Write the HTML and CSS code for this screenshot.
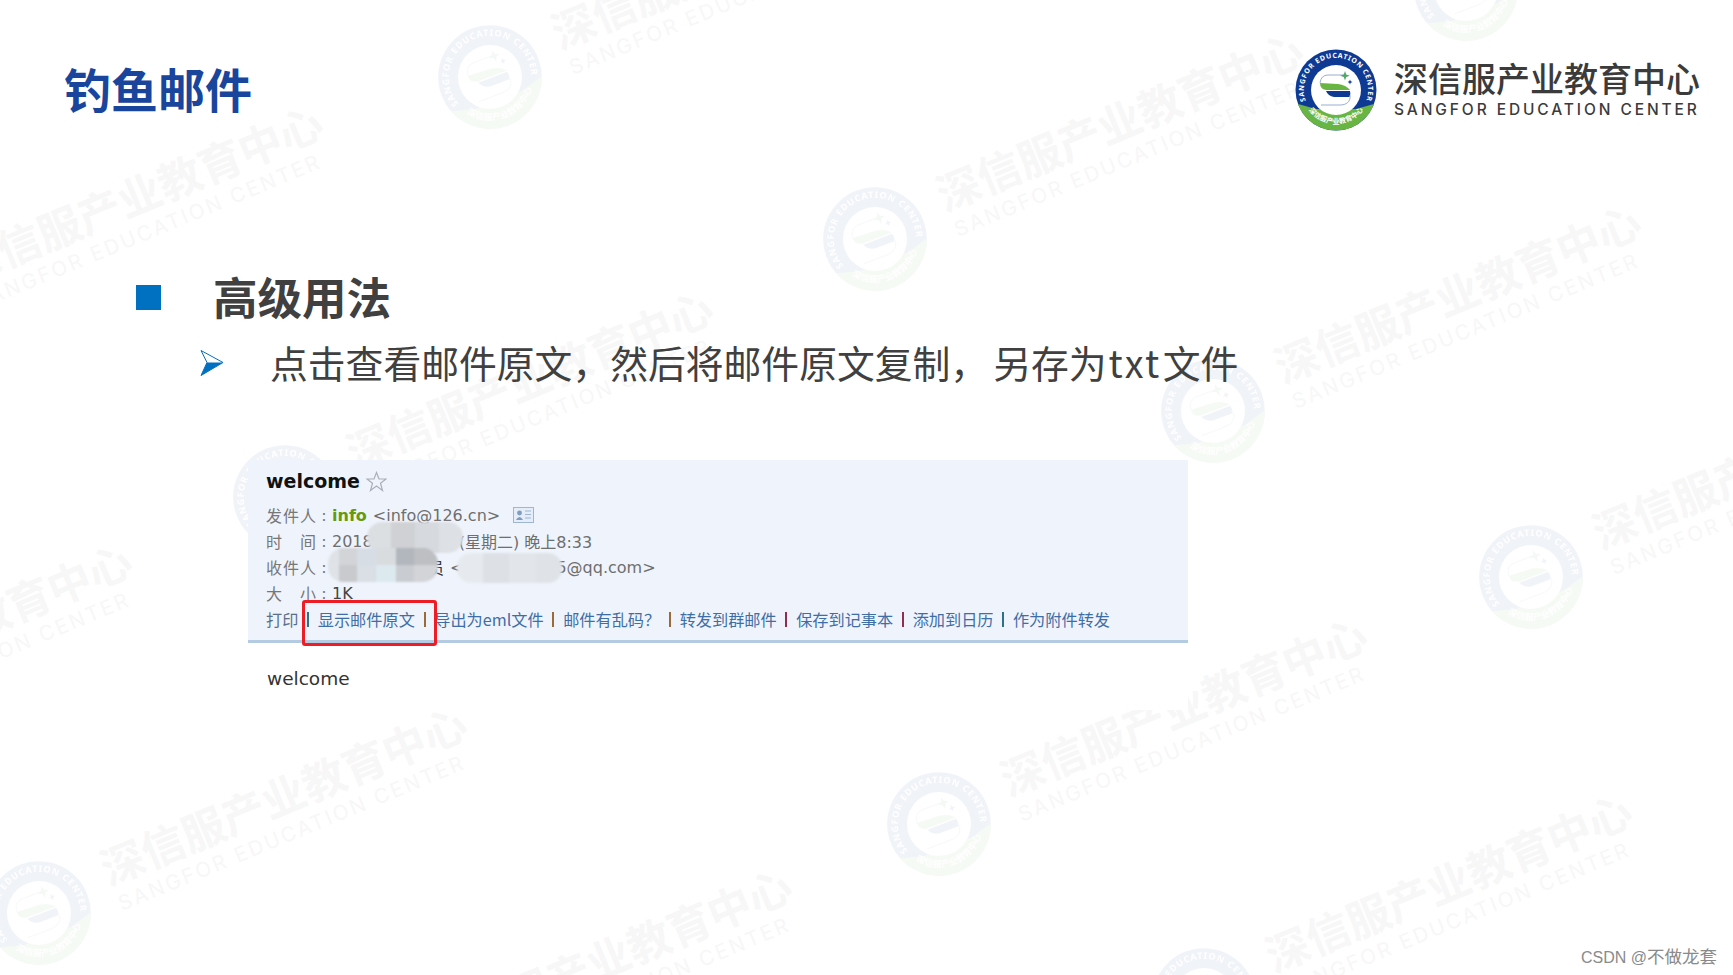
FILE: index.html
```html
<!DOCTYPE html>
<html lang="zh-CN">
<head>
<meta charset="utf-8">
<title>钓鱼邮件</title>
<link rel="stylesheet" href="styles.css">
</head>
<body>
<div class="slide">
  <svg class="watermarks" width="1733" height="975" viewBox="0 0 1733 975" aria-hidden="true">
    <defs>
      <path id="ring-top" d="M-29 14A32.2 32.2 0 1 1 29 14"/>
      <path id="ring-bottom" d="M-33 8A34 34 0 0 0 33 8"/>
      <g id="logo-mark">
        <circle r="40.5" fill="#0f3a94"/>
        <path d="M-38 14A40.5 40.5 0 0 0 38 14L20 19L-20 19Z" fill="#69b544"/>
        <circle r="25" fill="#fff"/>
        <text class="ring-en"><textPath href="#ring-top" startOffset="50%">SANGFOR EDUCATION CENTER</textPath></text>
        <text class="ring-cn"><textPath href="#ring-bottom" startOffset="50%">深信服产业教育中心</textPath></text>
        <path d="M8 -15H-8Q-15 -15 -16 -7" fill="none" stroke="#7f9bc6" stroke-width=".8"/>
        <path d="M-16 -7Q-16 -1 -10 0H14Q10 -5 2 -6Z" fill="#69b544"/>
        <path d="M-10 1H14Q15 4 13.5 7H-2Q-8 6 -10 1Z" fill="#0f3a94"/>
        <path d="M14 5C15 12 10 15 4 15H-15" fill="none" stroke="#7f9bc6" stroke-width=".8"/>
        <path d="M9 -19L10.2 -15.4L13.8 -14.2L10.2 -13L9 -9.4L7.8 -13L4.2 -14.2L7.8 -15.4Z" fill="#4fa866"/>
        <path d="M14 -10.5L14.7 -8.7L16.5 -8L14.7 -7.3L14 -5.5L13.3 -7.3L11.5 -8L13.3 -8.7Z" fill="#0f3a94"/>
      </g>
      <g id="wm">
        <g class="wm-logo" transform="rotate(-21) scale(1.28)"><use href="#logo-mark"/></g>
        <text class="wm-cn" transform="translate(70 -27) rotate(-22.500)">深信服产业教育中心</text>
        <text class="wm-en" transform="translate(83 -2) rotate(-22.500)">SANGFOR EDUCATION CENTER</text>
      </g>
    </defs>
    <use href="#wm" x="490" y="77"/>
    <use href="#wm" x="875" y="239"/>
    <use href="#wm" x="1213" y="411"/>
    <use href="#wm" x="1531" y="577"/>
    <use href="#wm" x="939" y="824"/>
    <use href="#wm" x="285" y="497"/>
    <use href="#wm" x="39" y="913"/>
    <use href="#wm" x="1466" y="-11"/>
    <use href="#wm" x="1204" y="1000"/>
    <use href="#wm" x="-105" y="312"/>
    <use href="#wm" x="-296" y="750"/>
    <use href="#wm" x="364" y="1075"/>
  </svg>

  <header class="header">
    <h1 class="title">钓鱼邮件</h1>
    <div class="brand">
      <svg class="brand-mark" width="82" height="82" viewBox="-41 -41 82 82" aria-hidden="true"><use href="#logo-mark"/></svg>
      <div class="brand-text">
        <div class="brand-cn">深信服产业教育中心</div>
        <div class="brand-en">SANGFOR EDUCATION CENTER</div>
      </div>
    </div>
  </header>

  <main class="content">
    <h2 class="heading"><span class="square"></span>高级用法</h2>
    <p class="sub">
      <svg class="arrow" width="24" height="26" viewBox="0 0 24 26" aria-hidden="true">
        <path d="M1 .5L23 12.5L1 25.5L7 12.5Z" fill="#fff" stroke="#0070c0" stroke-width="1"/>
        <path d="M1 25.5L7 12.5H23Z" fill="#0070c0"/>
      </svg>
      <span>点击查看邮件原文，然后将邮件原文复制<span class="wide-comma">，</span>另存为<span class="latin">txt</span>文件</span>
    </p>

    <section class="mail">
      <div class="mail-head">
        <div class="mail-title">welcome
          <svg class="star" width="21" height="21" viewBox="0 0 21 21" aria-hidden="true"><path d="M10.5 1.5L13 8H20L14.5 12.2L16.5 19.5L10.5 15L4.5 19.5L6.5 12.2L1 8H8Z" fill="none" stroke="#a9afb8" stroke-width="1.2"/></svg>
        </div>
        <div class="row"><span class="label">发件人</span><span class="colon">:</span><b class="sender">info</b><span class="addr">&lt;info@126.cn&gt;</span>
          <svg class="card" width="21" height="16" viewBox="0 0 21 16" aria-hidden="true"><rect x=".5" y=".5" width="20" height="15" fill="#e4edf8" stroke="#9db6d4"/><circle cx="6.5" cy="6" r="2.4" fill="#7f9cc0"/><path d="M3 13Q6.500 7 10 13Z" fill="#7f9cc0"/><path d="M12 4H18M12 7.500H18M12 11H18" stroke="#9db6d4"/></svg>
        </div>
        <div class="row"><span class="label">时间</span><span class="colon">:</span><span>2018</span><span class="after-date">(星期二) 晚上8:33</span></div>
        <div class="row"><span class="label">收件人</span><span class="colon">:</span><span class="recipient">员</span><span class="angle">&lt;</span><span class="after-recipient">5@qq.com&gt;</span></div>
        <div class="row"><span class="label">大小</span><span class="colon">:</span><span class="size">1K</span></div>
        <nav class="links">
          <a class="link-print">打印</a><i class="sep sep-teal"></i>
          <a>显示邮件原文</a><i class="sep sep-orange"></i>
          <a>导出为eml文件</a><i class="sep sep-orange"></i>
          <a>邮件有乱码？</a><i class="sep sep-orange"></i>
          <a>转发到群邮件</a><i class="sep sep-red"></i>
          <a>保存到记事本</a><i class="sep sep-red"></i>
          <a>添加到日历</a><i class="sep sep-teal"></i>
          <a>作为附件转发</a>
        </nav>
      </div>
      <p class="mail-body">welcome</p>
      <div class="blur blur-date"></div>
      <div class="blur blur-name"></div>
      <div class="blur blur-addr"></div>
      <div class="highlight"></div>
    </section>
  </main>
  <div class="credit">CSDN @<span class="credit-cn">不做龙套</span></div>
</div>
</body>
</html>
```

FILE: styles.css
```css
* { box-sizing: border-box; }
html, body { margin: 0; padding: 0; background: #fff; }
body { font-family: "Noto Sans CJK SC", "Noto Sans", sans-serif; }
.slide { position: relative; width: 1733px; height: 975px; padding-top: 49px; overflow: hidden; background: #fff; }

.watermarks { position: absolute; left: 0; top: 0; }
.wm-logo { opacity: .055; }
.wm-cn { font: 700 43.5px "Noto Sans CJK SC", sans-serif; fill: #f7f7f7; }
.wm-en { font: 400 20.5px "Inter", "Noto Sans", sans-serif; letter-spacing: 2.6px; fill: #f7f7f7; }
.ring-en { font: 700 7px "Noto Sans", sans-serif; letter-spacing: .75px; fill: #fff; text-anchor: middle; }
.ring-cn { font: 700 7px "Noto Sans CJK SC", sans-serif; fill: #fff; text-anchor: middle; }

.header, .content { position: relative; }
.header { display: flex; justify-content: space-between; align-items: center; height: 82px; padding: 0 34px 0 64px; }
.title { margin: -4px 0 0; font-size: 47px; line-height: 60px; font-weight: 700; color: #1a459c; }
.brand { display: flex; align-items: center; gap: 17px; }
.brand-mark { display: block; }
.brand-text { width: 305px; }
.brand-cn { height: 36px; margin-top: 0; font-size: 34px; line-height: 36px; font-weight: 500; color: #3b3b3b; white-space: nowrap; }
.brand-en { height: 22px; margin-top: 3px; font: 500 15.5px/22px "Inter", "Noto Sans", sans-serif; letter-spacing: 2.9px; color: #3b3b3b; white-space: nowrap; }

.content { margin-top: 135px; }
.heading { display: flex; align-items: center; height: 60px; margin: 0; padding-left: 136px; font-size: 44.5px; line-height: 60px; font-weight: 700; color: #404040; }
.square { width: 25px; height: 25px; margin-top: 3px; margin-right: 52px; background: #0070c0; }
.sub { display: flex; align-items: center; height: 50px; margin: 10px 0 0; padding-left: 200px; font-size: 37.8px; color: #404040; white-space: nowrap; }
.arrow { flex: none; margin-top: 3px; margin-right: 46px; }
.wide-comma { margin-right: 5px; }
.latin { letter-spacing: 2.5px; margin: 0 1px 0 2px; }

.mail { position: relative; width: 940px; height: 250px; margin: 74px 0 0 248px; background: #fff; font-family: "DejaVu Sans", "Noto Sans CJK SC", sans-serif; }
.mail-head { height: 183px; padding: 0 0 0 18px; background: #eff4fc; border-bottom: 3px solid #b4cbe4; }
.mail-title { display: flex; align-items: center; gap: 6px; height: 42px; font-size: 19px; font-weight: 700; color: #111; }
.star { display: block; }
.row { display: flex; align-items: center; height: 26px; font-size: 16px; color: #6e6e6e; white-space: nowrap; }
.label { width: 50px; text-align: justify; text-align-last: justify; color: #777; }
.colon { width: 16px; text-align: center; color: #777; }
.sender { color: #66990f; }
.addr { margin-left: 6px; }
.card { margin-left: 13px; }
.after-date { margin-left: 86px; }
.recipient { margin-left: 96px; color: #334; }
.angle { margin-left: 6px; }
.after-recipient { margin-left: 93px; }
.size { color: #444; }
.links { display: flex; align-items: center; height: 26px; font-family: "Noto Sans CJK SC", sans-serif; font-size: 16.2px; color: #3f6ea6; white-space: nowrap; }
.link-print { color: #5a6f8a; }
.sep { width: 2px; height: 15px; margin: 0 8.700px; flex: none; }
.sep-teal { background: #2f6f88; }
.sep-orange { background: #9a6a3a; }
.sep-red { background: #8f2f50; }
.mail-body { margin: 0; padding-left: 19px; height: 67px; line-height: 72px; font-size: 18.5px; color: #333; }

.blur { position: absolute; filter: blur(.8px); }
.blur-date { left: 119px; top: 62px; width: 96px; height: 31px; border-radius: 15px;
  background: linear-gradient(90deg, #dcdfe2 0 25%, #cfd1d4 25% 50%, #d6dade 50% 75%, #dde0e4 75%); }
.blur-name { left: 80px; top: 88px; width: 110px; height: 34px; border-radius: 15px;
  background:
    linear-gradient(90deg, #dfe3e8 0 10%, #d2d4d8 10% 26%, #d6dde5 26% 44%, #d9dcdf 44% 62%, #b2b6bd 62% 78%, #bdbfc2 78%) top / 100% 50% no-repeat,
    linear-gradient(90deg, #dfe3e8 0 10%, #c8cacd 10% 26%, #d9dfe4 26% 44%, #dce9ef 44% 62%, #c9ccd0 62% 78%, #d2d4d8 78%) bottom / 100% 50% no-repeat; }
.blur-addr { left: 209px; top: 93px; width: 105px; height: 30px; border-radius: 14px;
  background: linear-gradient(90deg, #e6eaee 0 25%, #dde1e6 25% 50%, #e2e6ea 50% 75%, #dfe3e7 75%); }
.highlight { position: absolute; left: 54px; top: 140px; width: 135px; height: 46px; border: 3.5px solid #ee1c25; border-radius: 3px; }

.credit { position: absolute; left: 1581px; top: 946px; font: 16px/22px "Liberation Sans", "Noto Sans CJK SC", sans-serif; color: #8a8a8a; }
.credit-cn { font-size: 17.5px; }
```
